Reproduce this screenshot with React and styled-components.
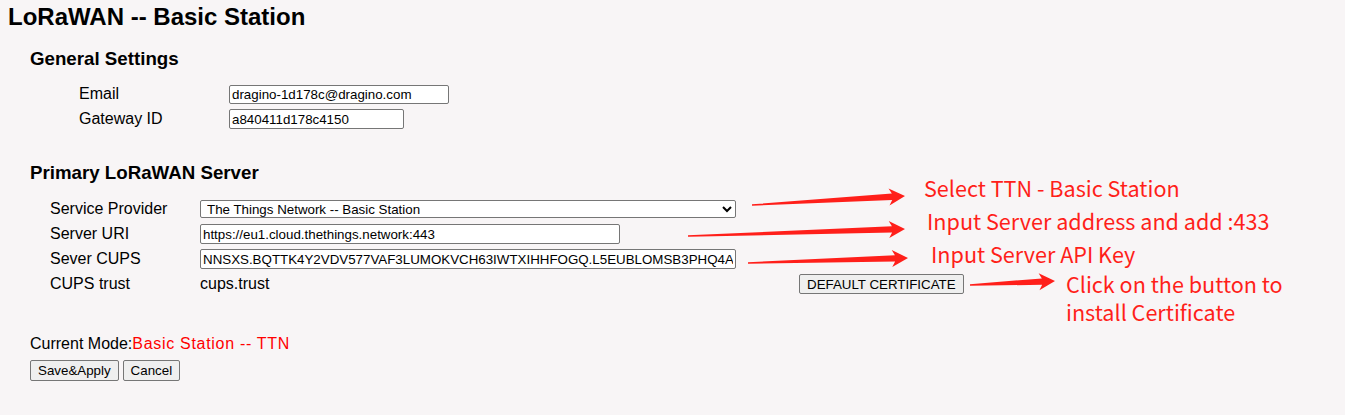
import React from "react";
import styled, { createGlobalStyle } from "styled-components";

const GlobalStyle = createGlobalStyle`
  html, body { margin: 0; padding: 0; }
  body {
    background: #f8f5f6;
    font-family: "Liberation Sans", Arial, sans-serif;
    color: #000;
  }
`;

const Page = styled.div`
  position: relative;
  width: 1345px;
  height: 415px;
  overflow: hidden;
`;

const Title = styled.h2`
  margin: 3px 0 0 8px;
  font-size: 24px;
  line-height: 28px;
  font-weight: bold;
`;

const Content = styled.div`
  padding-left: 30px;
  display: flex;
  flex-direction: column;
`;

const SectionTitle = styled.h3`
  margin: ${(p) => p.$top}px 0 0 0;
  font-size: 18.72px;
  line-height: 22px;
  font-weight: bold;
`;

const FieldTable = styled.div`
  margin: ${(p) => p.$top}px 0 0 ${(p) => p.$indent}px;
  display: flex;
  flex-direction: column;
  gap: 5px;
`;

const Row = styled.div`
  display: grid;
  grid-template-columns: 150px auto;
  align-items: center;
  height: 20px;
`;

const Label = styled.span`
  font-size: 16px;
  line-height: 18px;
  white-space: nowrap;
`;

const Value = styled.div`
  display: flex;
  align-items: center;
`;

const Plain = styled.span`
  font-size: 16px;
  line-height: 18px;
  width: ${(p) => p.$w}px;
`;

const TextInput = styled.input`
  box-sizing: border-box;
  width: ${(p) => p.$w}px;
  height: ${(p) => p.$h || 20}px;
  margin: 0;
  padding: 1px 2px;
  border: 1px solid #767676;
  border-radius: 2px;
  background: #fff;
  font-family: "Liberation Sans", Arial, sans-serif;
  font-size: 13.33px;
  color: #000;
  outline: none;
`;

const Select = styled.select`
  box-sizing: border-box;
  width: ${(p) => p.$w}px;
  height: 18px;
  margin: 0;
  padding: 0 0 0 2px;
  border: 1px solid #767676;
  border-radius: 2px;
  background: #fff;
  font-family: "Liberation Sans", Arial, sans-serif;
  font-size: 13.33px;
  color: #000;
  outline: none;
`;

const Button = styled.button`
  box-sizing: border-box;
  height: ${(p) => p.$h || 21}px;
  margin: 0;
  padding: 0 7px;
  border: 1px solid #767676;
  border-radius: 2px;
  background: #efefef;
  font-family: "Liberation Sans", Arial, sans-serif;
  font-size: 13.33px;
  color: #000;
  white-space: nowrap;
`;

const ModeLine = styled.div`
  margin-top: 41px;
  font-size: 16px;
  line-height: 18px;
`;

const ModeValue = styled.span`
  color: #ff0000;
  letter-spacing: 0.7px;
`;

const Actions = styled.div`
  margin-top: 7px;
  display: flex;
  gap: 4px;
`;

const Overlay = styled.svg`
  position: absolute;
  left: 0;
  top: 0;
  pointer-events: none;
`;

const Note = styled.div`
  position: absolute;
  left: ${(p) => p.$x}px;
  top: ${(p) => p.$y}px;
  font-family: "Noto Sans CJK SC", "Noto Sans", sans-serif;
  font-size: 21.6px;
  line-height: 28px;
  color: #ff1f1a;
  white-space: nowrap;
`;

const arrows = [
  { x1: 752, y1: 205, x2: 905, y2: 196 },
  { x1: 688, y1: 236, x2: 905, y2: 229 },
  { x1: 748, y1: 263, x2: 908, y2: 258 },
  { x1: 970, y1: 285, x2: 1055, y2: 281 },
];

function arrowPoints({ x1, y1, x2, y2 }) {
  const L = Math.hypot(x2 - x1, y2 - y1);
  const a = Math.atan2(y2 - y1, x2 - x1);
  const c = Math.cos(a);
  const s = Math.sin(a);
  const local = [
    [0, -0.7],
    [L - 13, -3.2],
    [L - 16, -8.5],
    [L, 0],
    [L - 16, 8.5],
    [L - 13, 3.2],
    [0, 0.7],
  ];
  return local
    .map(([x, y]) => `${(x1 + x * c - y * s).toFixed(2)},${(y1 + x * s + y * c).toFixed(2)}`)
    .join(" ");
}

export default function App() {
  return (
    <>
      <GlobalStyle />
      <Page>
        <Title>LoRaWAN -- Basic Station</Title>
        <Content>
          <SectionTitle $top={17}>General Settings</SectionTitle>
          <FieldTable $top={14} $indent={49}>
            <Row>
              <Label>Email</Label>
              <TextInput $w={220} $h={19} readOnly defaultValue="dragino-1d178c@dragino.com" />
            </Row>
            <Row>
              <Label>Gateway ID</Label>
              <TextInput $w={175} readOnly defaultValue="a840411d178c4150" />
            </Row>
          </FieldTable>

          <SectionTitle $top={33}>Primary LoRaWAN Server</SectionTitle>
          <FieldTable $top={15} $indent={20}>
            <Row>
              <Label>Service Provider</Label>
              <Select $w={536} defaultValue="ttn">
                <option value="ttn">The Things Network -- Basic Station</option>
              </Select>
            </Row>
            <Row>
              <Label>Server URI</Label>
              <TextInput $w={420} readOnly defaultValue="https://eu1.cloud.thethings.network:443" />
            </Row>
            <Row>
              <Label>Sever CUPS</Label>
              <TextInput
                $w={536}
                readOnly
                defaultValue="NNSXS.BQTTK4Y2VDV577VAF3LUMOKVCH63IWTXIHHFOGQ.L5EUBLOMSB3PHQ4AZKXTQJ7NWYAHGRKQ"
              />
            </Row>
            <Row>
              <Label>CUPS trust</Label>
              <Value>
                <Plain $w={599}>cups.trust</Plain>
                <Button $h={20}>DEFAULT CERTIFICATE</Button>
              </Value>
            </Row>
          </FieldTable>

          <ModeLine>
            Current Mode:<ModeValue>Basic Station -- TTN</ModeValue>
          </ModeLine>
          <Actions>
            <Button>Save&amp;Apply</Button>
            <Button>Cancel</Button>
          </Actions>
        </Content>

        <Overlay width="1345" height="415" viewBox="0 0 1345 415">
          {arrows.map((a, i) => (
            <polygon key={i} points={arrowPoints(a)} fill="#ff1f1a" />
          ))}
        </Overlay>
        <Note $x={924} $y={174}>Select TTN - Basic Station</Note>
        <Note $x={927} $y={207}>Input Server address and add :433</Note>
        <Note $x={931} $y={240}>Input Server API Key</Note>
        <Note $x={1066} $y={270}>
          Click on the button to
          <br />
          install Certificate
        </Note>
      </Page>
    </>
  );
}
